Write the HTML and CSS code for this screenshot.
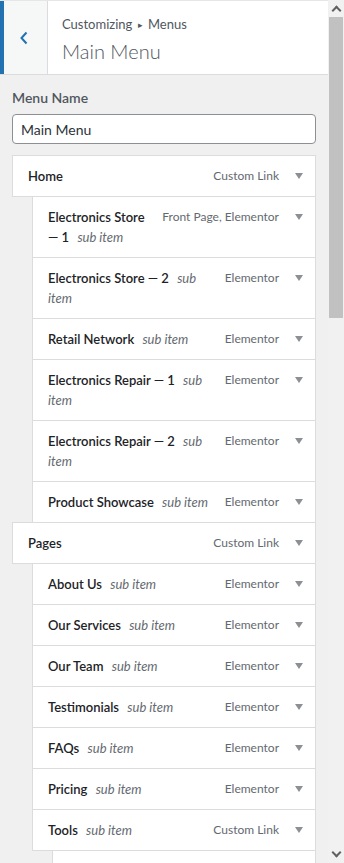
FILE: index.html
```html
<!DOCTYPE html>
<html lang="en">
<head>
    <meta charset="UTF-8">
    <meta name="viewport" content="width=device-width, initial-scale=1.0">
    <title>Customizing - Menus</title>
    <link rel="stylesheet" href="styles.css">
</head>
<body>
    <div class="panel">
        <div class="panel-header">
            <button class="back-btn" aria-label="Back">
                <svg width="10" height="14" viewBox="0 0 10 14"><path d="M7.5 1.5 2.5 7l5 5.5" fill="none" stroke="#2271b1" stroke-width="2"/></svg>
            </button>
            <div class="panel-title">
                <span class="crumbs">Customizing <span class="crumb-sep">&#9656;</span> Menus</span>
                <h3>Main Menu</h3>
            </div>
        </div>

        <div class="panel-body">
            <label class="field-label" for="menu-name">Menu Name</label>
            <input class="menu-name" id="menu-name" type="text" value="Main Menu">

            <ul class="menu-items">
                <li class="menu-item depth-0">
                    <span class="item-title">Home</span>
                    <span class="item-type">Custom Link</span>
                    <span class="item-arrow"></span>
                </li>
                <li class="menu-item depth-1">
                    <span class="item-title"><b>Electronics Store — 1</b> <i>sub item</i></span>
                    <span class="item-type">Front Page, Elementor</span>
                    <span class="item-arrow"></span>
                </li>
                <li class="menu-item depth-1">
                    <span class="item-title"><b>Electronics Store — 2</b> <i>sub item</i></span>
                    <span class="item-type">Elementor</span>
                    <span class="item-arrow"></span>
                </li>
                <li class="menu-item depth-1">
                    <span class="item-title"><b>Retail Network</b> <i>sub item</i></span>
                    <span class="item-type">Elementor</span>
                    <span class="item-arrow"></span>
                </li>
                <li class="menu-item depth-1">
                    <span class="item-title"><b>Electronics Repair — 1</b> <i>sub item</i></span>
                    <span class="item-type">Elementor</span>
                    <span class="item-arrow"></span>
                </li>
                <li class="menu-item depth-1">
                    <span class="item-title"><b>Electronics Repair — 2</b> <i>sub item</i></span>
                    <span class="item-type">Elementor</span>
                    <span class="item-arrow"></span>
                </li>
                <li class="menu-item depth-1">
                    <span class="item-title"><b>Product Showcase</b> <i>sub item</i></span>
                    <span class="item-type">Elementor</span>
                    <span class="item-arrow"></span>
                </li>
                <li class="menu-item depth-0">
                    <span class="item-title">Pages</span>
                    <span class="item-type">Custom Link</span>
                    <span class="item-arrow"></span>
                </li>
                <li class="menu-item depth-1">
                    <span class="item-title"><b>About Us</b> <i>sub item</i></span>
                    <span class="item-type">Elementor</span>
                    <span class="item-arrow"></span>
                </li>
                <li class="menu-item depth-1">
                    <span class="item-title"><b>Our Services</b> <i>sub item</i></span>
                    <span class="item-type">Elementor</span>
                    <span class="item-arrow"></span>
                </li>
                <li class="menu-item depth-1">
                    <span class="item-title"><b>Our Team</b> <i>sub item</i></span>
                    <span class="item-type">Elementor</span>
                    <span class="item-arrow"></span>
                </li>
                <li class="menu-item depth-1">
                    <span class="item-title"><b>Testimonials</b> <i>sub item</i></span>
                    <span class="item-type">Elementor</span>
                    <span class="item-arrow"></span>
                </li>
                <li class="menu-item depth-1">
                    <span class="item-title"><b>FAQs</b> <i>sub item</i></span>
                    <span class="item-type">Elementor</span>
                    <span class="item-arrow"></span>
                </li>
                <li class="menu-item depth-1">
                    <span class="item-title"><b>Pricing</b> <i>sub item</i></span>
                    <span class="item-type">Elementor</span>
                    <span class="item-arrow"></span>
                </li>
                <li class="menu-item depth-1">
                    <span class="item-title"><b>Tools</b> <i>sub item</i></span>
                    <span class="item-type">Custom Link</span>
                    <span class="item-arrow"></span>
                </li>
                <li class="menu-item depth-2"></li>
            </ul>
        </div>
    </div>

    <div class="scrollbar">
        <span class="scroll-btn up"></span>
        <div class="scroll-track">
            <div class="scroll-thumb"></div>
        </div>
        <span class="scroll-btn down"></span>
    </div>
</body>
</html>
```

FILE: styles.css
```css
* {
    margin: 0;
    padding: 0;
    box-sizing: border-box;
}

body {
    font-family: 'Lato', 'Noto Sans', sans-serif;
    font-size: 13px;
    color: #1d2327;
    background-color: #f0f0f1;
    display: flex;
    height: 863px;
    overflow: hidden;
}

.panel {
    width: 328px;
    height: 863px;
    overflow: hidden;
}

.panel-header {
    display: flex;
    height: 75px;
    background-color: #fff;
    border-top: 1px solid #e6e6e6;
    border-bottom: 1px solid #dcdcde;
}

.back-btn {
    width: 48px;
    background-color: #f6f7f7;
    border: none;
    border-left: 4px solid #2271b1;
    border-right: 1px solid #dcdcde;
    display: flex;
    align-items: center;
    justify-content: center;
    padding-right: 4px;
}

.panel-title {
    padding: 13px 14px 0 14px;
    color: #50575e;
}

.crumbs {
    display: block;
    font-size: 13px;
    line-height: 20px;
}

.crumb-sep {
    font-size: 9px;
    padding: 0 2px;
    vertical-align: 1px;
}

.panel-title h3 {
    font-size: 20px;
    font-weight: 300;
    line-height: 26px;
    margin-top: 3px;
}

.panel-body {
    padding: 13px 12px 0 12px;
}

.field-label {
    display: block;
    font-size: 14px;
    font-weight: 600;
    color: #50575e;
    line-height: 20px;
    margin-bottom: 6px;
}

.menu-name {
    display: block;
    width: 100%;
    height: 30px;
    border: 1px solid #8c8f94;
    border-radius: 4px;
    padding: 0 8px;
    font-family: inherit;
    font-size: 14px;
    color: #2c3338;
    background-color: #fff;
}

.menu-items {
    list-style: none;
    margin-top: 11px;
}

.menu-item {
    display: flex;
    align-items: flex-start;
    gap: 10px;
    min-height: 42px;
    background-color: #fff;
    border: 1px solid #dcdcde;
    margin-top: -1px;
    padding: 10px 12px 10px 15px;
    line-height: 20px;
}

.menu-item:first-child {
    margin-top: 0;
}

.depth-1 {
    margin-left: 20px;
}

.depth-2 {
    margin-left: 40px;
}

.item-title {
    flex: 1;
    font-weight: 600;
}

.item-title b {
    font-weight: 600;
}

.item-title i {
    font-weight: 400;
    color: #646970;
    margin-left: 5px;
}

.item-type {
    font-size: 12px;
    color: #646970;
    white-space: nowrap;
}

.item-arrow {
    width: 0;
    height: 0;
    margin: 7px 0 0 6px;
    border-left: 4px solid transparent;
    border-right: 4px solid transparent;
    border-top: 6px solid #8c8f94;
}

.scrollbar {
    width: 16px;
    height: 863px;
    background-color: #f1f1f1;
    display: flex;
    flex-direction: column;
}

.scroll-btn {
    height: 17px;
    display: flex;
    align-items: center;
    justify-content: center;
}

.scroll-btn::before {
    content: '';
    width: 5px;
    height: 5px;
    border-left: 2px solid #606060;
    border-top: 2px solid #606060;
    transform: translateY(2px) rotate(45deg);
}

.scroll-btn.down::before {
    transform: translateY(-2px) rotate(225deg);
}

.scroll-track {
    flex: 1;
    padding: 0 1px;
}

.scroll-thumb {
    height: 301px;
    background-color: #c1c1c1;
}
```
